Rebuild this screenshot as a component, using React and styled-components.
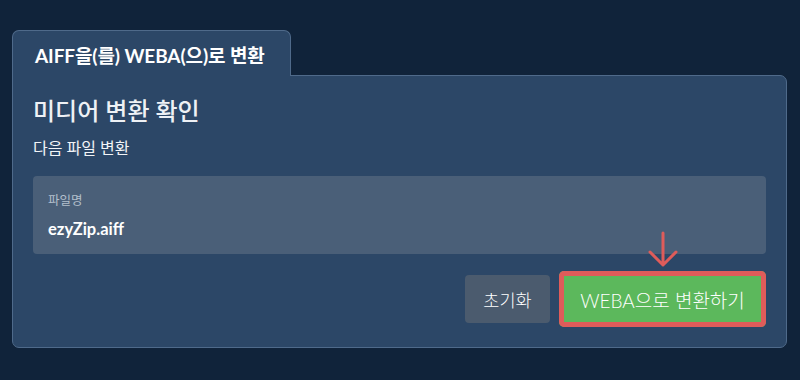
import React from "react";
import styled, { createGlobalStyle } from "styled-components";

const Global = createGlobalStyle`
  html, body { margin: 0; padding: 0; background: #10233a; }
  body { font-family: Lato, "Noto Sans CJK KR", sans-serif; color: #fff; }
`;

const Page = styled.div`
  width: 800px;
  height: 380px;
  box-sizing: border-box;
  padding: 30px 13px 0 12px;
  display: flex;
  flex-direction: column;
`;

const Tab = styled.div`
  align-self: flex-start;
  width: 279px;
  height: 46px;
  box-sizing: border-box;
  background: #2c4767;
  border: 1px solid #4f6a8a;
  border-bottom: none;
  border-radius: 7px 7px 0 0;
  display: flex;
  align-items: center;
  padding-left: 22px;
  padding-top: 1px;
  font-size: 19px;
  font-weight: 700;
  margin-bottom: -1px;
  position: relative;
  z-index: 1;
  letter-spacing: -0.1px;
  white-space: nowrap;
`;

const Panel = styled.div`
  background: #2c4767;
  border: 1px solid #4f6a8a;
  border-radius: 0 7px 7px 7px;
  padding: 19px 20px 20px 20px;
  display: flex;
  flex-direction: column;
`;

const Title = styled.h2`
  margin: 0;
  font-size: 24px;
  line-height: 32px;
  font-weight: 500;
  color: #eef1f5;
`;

const Subtitle = styled.div`
  margin-top: 10px;
  font-size: 16px;
  line-height: 22px;
  color: #f2f4f7;
`;

const Field = styled.div`
  margin-top: 17px;
  background: #4a5f78;
  border-radius: 4px;
  padding: 17px 15px 15px 15px;
  display: flex;
  flex-direction: column;
  gap: 10px;
`;

const Label = styled.div`
  font-size: 12.5px;
  line-height: 16px;
  color: #b3bfcc;
`;

const Value = styled.div`
  font-size: 16.5px;
  line-height: 20px;
  font-weight: 700;
  color: #fff;
`;

const Actions = styled.div`
  margin-top: 17px;
  display: flex;
  justify-content: flex-end;
  align-items: center;
  gap: 9px;
`;

const Button = styled.button`
  font-family: Lato, "Noto Sans CJK KR", sans-serif;
  color: #fff;
  border: none;
  cursor: pointer;
  box-sizing: border-box;
  display: flex;
  align-items: center;
  justify-content: center;
  white-space: nowrap;
  background: ${(p) => (p.$primary ? "#5cb85c" : "#4b5b6e")};
  border-radius: ${(p) => (p.$primary ? "5px" : "4px")};
  height: ${(p) => (p.$primary ? "56px" : "48px")};
  width: ${(p) => (p.$primary ? "207px" : "85px")};
  font-size: ${(p) => (p.$primary ? "19px" : "17.5px")};
  font-weight: 300;
  outline: none;
  box-shadow: ${(p) => (p.$primary ? "inset 0 0 0 5px #df5c5a" : "none")};
  position: relative;
`;

const Arrow = styled.svg`
  position: absolute;
  left: 50%;
  top: -39px;
  transform: translateX(-50%);
  overflow: visible;
`;

export default function App() {
  return (
    <>
      <Global />
      <Page>
        <Tab>AIFF을(를) WEBA(으)로 변환</Tab>
        <Panel>
          <Title>미디어 변환 확인</Title>
          <Subtitle>다음 파일 변환</Subtitle>
          <Field>
            <Label>파일명</Label>
            <Value>ezyZip.aiff</Value>
          </Field>
          <Actions>
            <Button>초기화</Button>
            <Button $primary>
              <Arrow width="30" height="36" viewBox="0 0 30 36">
                <path
                  d="M15 1 V33 M2 20 L15 33 L28 20"
                  fill="none"
                  stroke="#df5c5a"
                  strokeWidth="3"
                  strokeLinecap="round"
                  strokeLinejoin="round"
                />
              </Arrow>
              WEBA으로 변환하기
            </Button>
          </Actions>
        </Panel>
      </Page>
    </>
  );
}
